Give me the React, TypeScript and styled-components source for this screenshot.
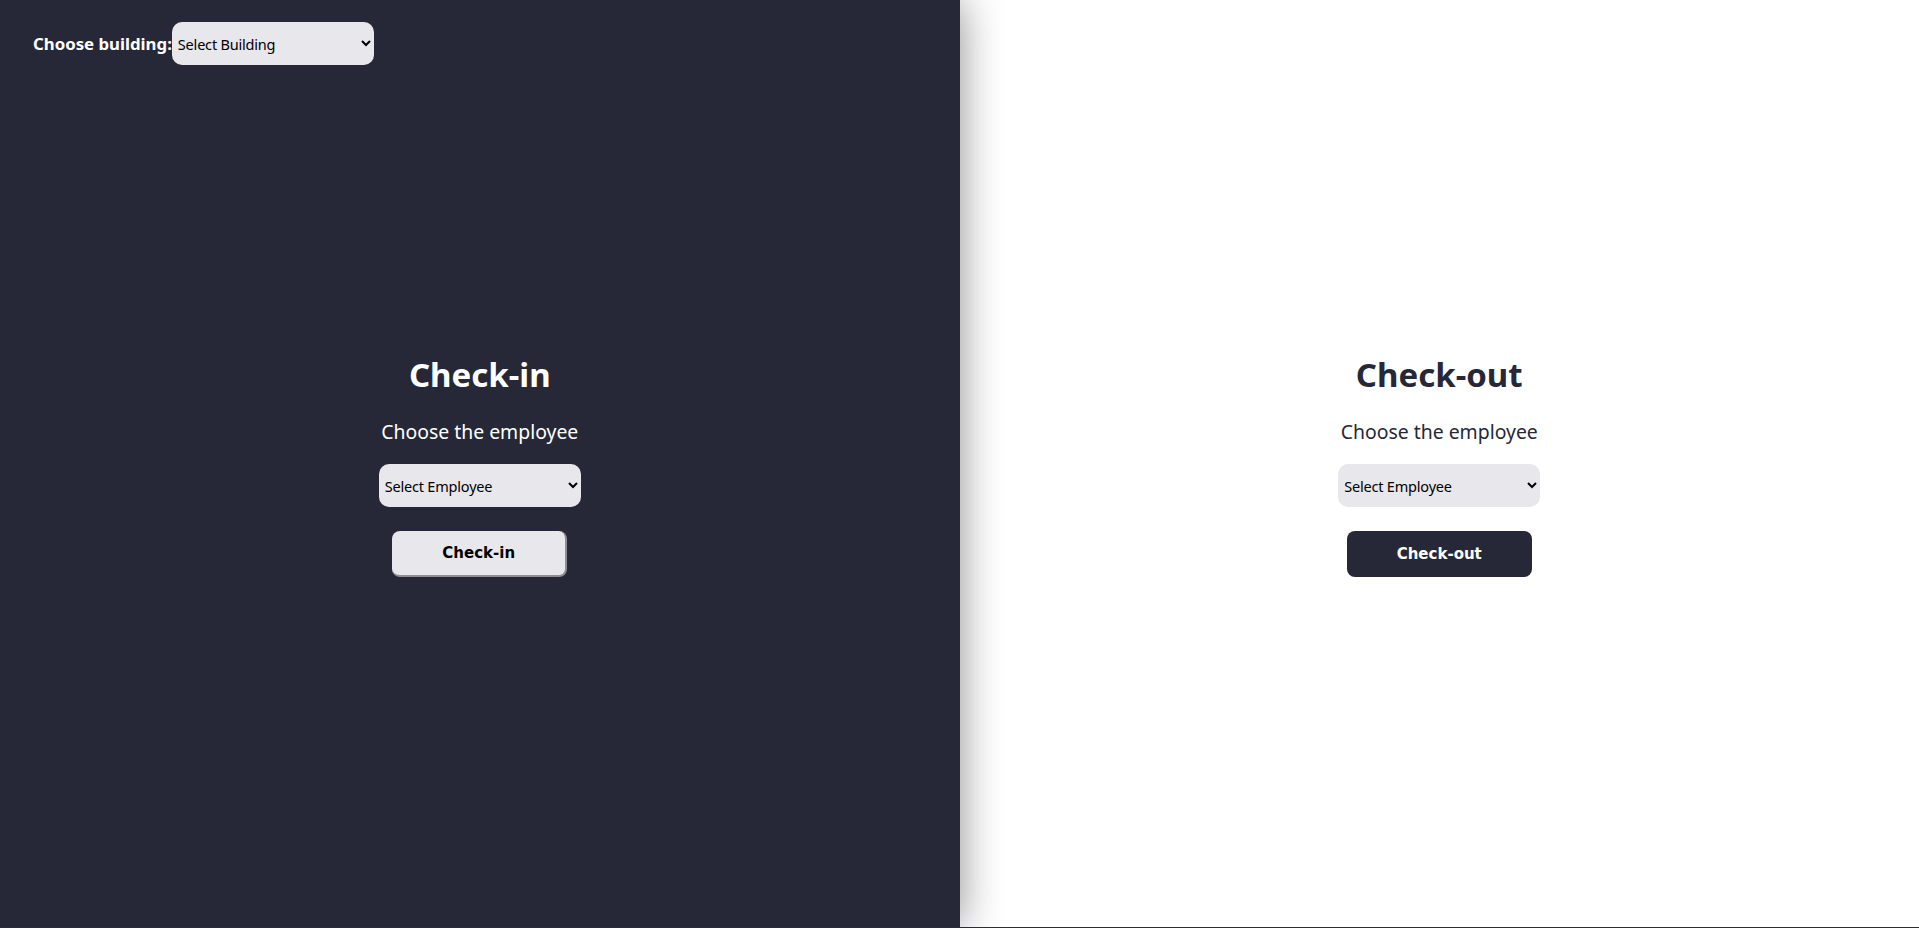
import React from "react";
import styled, { createGlobalStyle } from "styled-components";

const Global = createGlobalStyle`
  html, body { margin: 0; padding: 0; background: #2a2d38; }
  body { font-family: "Noto Sans", "Open Sans", sans-serif; }
  * { box-sizing: border-box; }
`;

const Page = styled.div`
  display: flex;
  width: 100%;
  height: calc(100vh - 1px);
  overflow: hidden;
`;

const Panel = styled.section<{ $dark?: boolean }>`
  flex: 1;
  display: grid;
  grid-template-rows: 1fr auto 1fr;
  background: ${(p) => (p.$dark ? "#262837" : "#ffffff")};
  color: ${(p) => (p.$dark ? "#ffffff" : "#262837")};
  position: relative;
  z-index: ${(p) => (p.$dark ? 1 : 0)};
  box-shadow: ${(p) => (p.$dark ? "0 0 40px rgba(0,0,0,0.45)" : "none")};
`;

const TopBar = styled.div`
  display: flex;
  align-items: center;
  align-self: start;
  padding: 22px 0 0 33px;
`;

const BarLabel = styled.label`
  font-weight: 700;
  font-size: 16.8px;
  color: #ffffff;
`;

const Dropdown = styled.select`
  width: 202px;
  height: 43px;
  border: none;
  border-radius: 10px;
  background: #e8e7ec;
  color: #000;
  font-family: "Noto Sans", sans-serif;
  font-size: 14.5px;
  letter-spacing: -0.2px;
  padding: 0 4px 0 2px;
  outline: none;
`;

const Content = styled.div`
  display: flex;
  flex-direction: column;
  align-items: center;
  padding-top: 5px;
`;

const Title = styled.h1`
  margin: 0;
  font-size: 33px;
  line-height: 40px;
  font-weight: 700;
`;

const Prompt = styled.p`
  margin: 23px 0 18px;
  font-size: 19.4px;
  line-height: 28px;
`;

const ActionButton = styled.button<{ $dark?: boolean }>`
  margin-top: 24px;
  height: 46px;
  width: ${(p) => (p.$dark ? "185px" : "175px")};
  border-radius: 8px;
  font-family: "DejaVu Sans", sans-serif;
  font-weight: 700;
  font-size: 15px;
  cursor: pointer;
  background: ${(p) => (p.$dark ? "#262837" : "#e8e7ec")};
  color: ${(p) => (p.$dark ? "#ffffff" : "#000000")};
  border: none;
  ${(p) =>
    p.$dark
      ? ""
      : "border-right: 2px solid #8f8f93; border-bottom: 2px solid #8f8f93;"}
`;

export default function App() {
  return (
    <>
      <Global />
      <Page>
        <Panel $dark>
          <TopBar>
            <BarLabel htmlFor="building">Choose building:</BarLabel>
            <Dropdown id="building" defaultValue="">
              <option value="">Select Building</option>
            </Dropdown>
          </TopBar>
          <Content>
            <Title>Check-in</Title>
            <Prompt>Choose the employee</Prompt>
            <Dropdown defaultValue="">
              <option value="">Select Employee</option>
            </Dropdown>
            <ActionButton>Check-in</ActionButton>
          </Content>
          <div />
        </Panel>
        <Panel>
          <div />
          <Content>
            <Title>Check-out</Title>
            <Prompt>Choose the employee</Prompt>
            <Dropdown defaultValue="">
              <option value="">Select Employee</option>
            </Dropdown>
            <ActionButton $dark>Check-out</ActionButton>
          </Content>
          <div />
        </Panel>
      </Page>
    </>
  );
}
